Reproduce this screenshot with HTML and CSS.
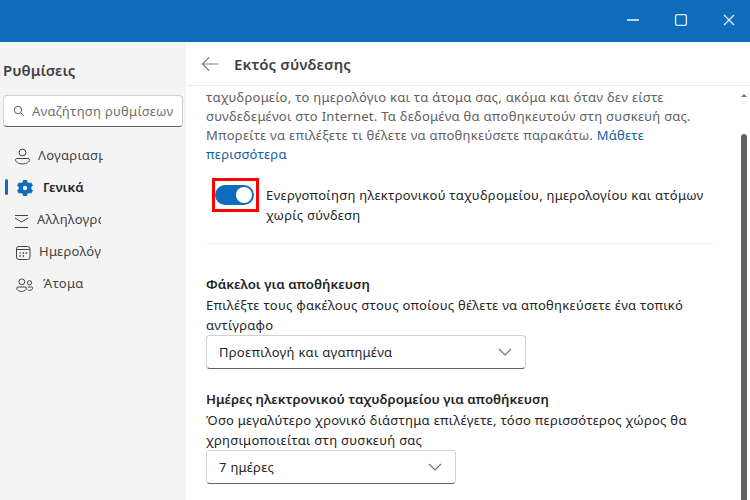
FILE: index.html
```html
<!DOCTYPE html>
<html lang="el">
<head>
  <meta charset="UTF-8">
  <meta name="viewport" content="width=device-width, initial-scale=1.0">
  <title>Ρυθμίσεις</title>
  <link rel="stylesheet" href="styles.css">
</head>
<body>
  <header class="titlebar">
    <svg class="win-icon" viewBox="0 0 14 14"><path d="M1 7h12" stroke-width="1.6"/></svg>
    <svg class="win-icon" viewBox="0 0 14 14"><rect x="1.6" y="1.6" width="10.8" height="10.8" rx="1.4"/></svg>
    <svg class="win-icon" viewBox="0 0 14 14"><path d="M2 2l10 10M12 2L2 12"/></svg>
  </header>

  <div class="window">
    <aside class="sidebar">
      <h1>Ρυθμίσεις</h1>
      <div class="search">
        <svg class="icon search-icon" viewBox="0 0 12 12"><circle cx="5" cy="5" r="3.7"/><path d="M7.8 7.8l3 3"/></svg>
        <span>Αναζήτηση ρυθμίσεων</span>
      </div>
      <nav class="menu">
        <div class="menu-item accounts">
          <svg class="icon" viewBox="0 0 18 18"><circle cx="9.5" cy="5.5" r="3.4"/><path d="M4 11.500h11c.9 0 1.500.5 1.500 1.300 0 2.200-2.900 4.100-7 4.100s-7-1.900-7-4.100c0-.8.6-1.300 1.500-1.300z"/></svg>
          <span>Λογαριασμοί</span>
        </div>
        <div class="menu-item general active">
          <svg class="icon gear" viewBox="0 0 18 18"><path fill-rule="evenodd" d="M7.200 1h3.600l.6 2.300 1.500.8 2.300-.7 1.800 3.100-1.700 1.600v1.800l1.700 1.600-1.800 3.100-2.300-.7-1.500.8-.6 2.300H7.200l-.6-2.300-1.500-.8-2.300.7L1 11.500l1.700-1.600V8.100L1 6.500l1.800-3.100 2.300.7 1.500-.8zM9 6.800a2.200 2.200 0 1 0 0 4.400 2.200 2.200 0 0 0 0-4.400z"/></svg>
          <span>Γενικά</span>
        </div>
        <div class="menu-item mail">
          <svg class="icon" viewBox="0 0 18 18"><path d="M2 4.500h13M2 16.500h13M2 7l6.500 4 6.500-4"/></svg>
          <span>Αλληλογραφία</span>
        </div>
        <div class="menu-item calendar">
          <svg class="icon" viewBox="0 0 18 18"><rect x="3.500" y="3.500" width="13.500" height="13" rx="2.300"/><path d="M3.500 6.500H17"/><path d="M9.500 10h1.500M12.700 10h1.500M6.300 13h1.500M9.500 13h1.500" stroke-width="1.500"/><path d="M6.300 10h1.500" stroke-width="1"/></svg>
          <span>Ημερολόγιο</span>
        </div>
        <div class="menu-item people">
          <svg class="icon" viewBox="0 0 18 18"><circle cx="6.800" cy="6.800" r="2.900"/><circle cx="14.500" cy="7.800" r="2.100"/><path d="M3 12h7.200c.8 0 1.200.4 1.200 1 0 2-2 3.500-4.800 3.500s-4.800-1.500-4.800-3.500c0-.6.400-1 1.200-1zM12.800 12h4c.6 0 .9.300.9.900 0 1.400-1.500 2.400-3.200 2.400-.7 0-1.300-.1-1.900-.4"/></svg>
          <span>Άτομα</span>
        </div>
      </nav>
    </aside>

    <main class="panel">
      <div class="panel-header">
        <svg class="back" viewBox="0 0 18 16"><path d="M8.300 1.200L1.300 8l7 6.800M1.300 8h15.700"/></svg>
        <h2>Εκτός σύνδεσης</h2>
      </div>
      <div class="panel-body">
        <div class="content">
          <p class="intro">ταχυδρομείο, το ημερολόγιο και τα άτομα σας, ακόμα και όταν δεν είστε<br>συνδεδεμένοι στο Internet. Τα δεδομένα θα αποθηκευτούν στη συσκευή σας.<br>Μπορείτε να επιλέξετε τι θέλετε να αποθηκεύσετε παρακάτω. <a>Μάθετε<br>περισσότερα</a></p>
          <div class="toggle-row">
            <div class="highlight"><div class="toggle"><div class="knob"></div></div></div>
            <p>Ενεργοποίηση ηλεκτρονικού ταχυδρομείου, ημερολογίου και ατόμων<br>χωρίς σύνδεση</p>
          </div>
          <section class="setting folders">
            <h3>Φάκελοι για αποθήκευση</h3>
            <p>Επιλέξτε τους φακέλους στους οποίους θέλετε να αποθηκεύσετε ένα τοπικό<br>αντίγραφο</p>
            <div class="select">
              <span>Προεπιλογή και αγαπημένα</span>
              <svg class="chevron warm" viewBox="0 0 14 8"><path d="M1 1l6 6 6-6"/></svg>
            </div>
          </section>
          <section class="setting days">
            <h3>Ημέρες ηλεκτρονικού ταχυδρομείου για αποθήκευση</h3>
            <p>Όσο μεγαλύτερο χρονικό διάστημα επιλέγετε, τόσο περισσότερος χώρος θα<br>χρησιμοποιείται στη συσκευή σας</p>
            <div class="select">
              <span>7 ημέρες</span>
              <svg class="chevron" viewBox="0 0 14 8"><path d="M1 1l6 6 6-6"/></svg>
            </div>
          </section>
        </div>
        <div class="scrollbar">
          <div class="scroll-up"></div>
          <div class="thumb"></div>
        </div>
      </div>
    </main>
  </div>
</body>
</html>
```
FILE: styles.css
```css
* {
  box-sizing: border-box;
}
body {
  font-family: "Noto Sans", "Open Sans", sans-serif;
  font-size: 13px;
  letter-spacing: 0.28px;
  line-height: 20px;
  color: #242424;
  background-color: #fff;
  margin: 0;
  height: 100vh;
  display: flex;
  flex-direction: column;
  overflow: hidden;
}
h1, h2, h3, p {
  margin: 0;
}
h1, h2, h3 {
  letter-spacing: 0;
}
svg {
  fill: none;
  flex-shrink: 0;
}
.titlebar {
  height: 42px;
  flex-shrink: 0;
  background-color: #0f6cbd;
  display: flex;
  justify-content: flex-end;
  align-items: center;
  gap: 34px;
  padding: 0 14px 2px 0;
}
.win-icon {
  width: 14px;
  height: 14px;
  stroke: #e4eef8;
  stroke-width: 1.3;
}
.window {
  flex: 1;
  display: flex;
  min-height: 0;
}
.sidebar {
  width: 186px;
  flex-shrink: 0;
  background-color: #f4f4f4;
  padding: 18px 3px 0;
}
.sidebar h1 {
  font-size: 15px;
  font-weight: 600;
  color: #424242;
  line-height: 20px;
}
.search {
  display: flex;
  align-items: center;
  gap: 7px;
  width: 180px;
  height: 32px;
  margin-top: 15px;
  padding-left: 9px;
  background-color: #fff;
  border: 1px solid #d1d1d1;
  border-bottom-color: #616161;
  border-radius: 4px;
  color: #707070;
  white-space: nowrap;
}
.icon {
  width: 18px;
  height: 18px;
  stroke: #424242;
  stroke-width: 1;
}
.search-icon {
  width: 12px;
  height: 12px;
  stroke: #616161;
}
.menu {
  margin-top: 12px;
}
.menu-item {
  display: flex;
  align-items: center;
  height: 32px;
  width: 100px;
  padding-left: 10px;
  color: #424242;
  overflow: hidden;
  white-space: nowrap;
}
.menu-item .icon {
  margin-top: 2px;
}
.accounts span {
  margin-left: 7px;
}
.general {
  padding-left: 0;
  color: #242424;
  font-size: 13.2px;
  font-weight: 600;
  letter-spacing: 0;
}
.general::before {
  content: "";
  width: 3px;
  height: 16px;
  margin: 0 10px 0 2px;
  border-radius: 2px;
  background-color: #0f6cbd;
}
.general .gear {
  margin-right: 9px;
  margin-left: -2px;
  fill: #0f6cbd;
  stroke: none;
}
.mail {
  width: 98px;
}
.mail span {
  margin-left: 6px;
}
.calendar {
  width: 99px;
}
.calendar span {
  margin-left: 8px;
}
.people {
  padding-left: 12px;
}
.people span {
  margin-left: 10px;
}
.panel {
  flex: 1;
  display: flex;
  flex-direction: column;
  min-width: 0;
}
.panel-header {
  display: flex;
  align-items: center;
  gap: 15px;
  height: 44px;
  flex-shrink: 0;
  padding-left: 15px;
  border-bottom: 1px solid #ebebeb;
}
.panel-header h2 {
  font-size: 15px;
  font-weight: 600;
  letter-spacing: 0.15px;
  color: #424242;
}
.back {
  width: 18px;
  height: 16px;
  stroke: #808080;
  stroke-width: 1.2;
}
.panel-body {
  flex: 1;
  display: flex;
  min-height: 0;
}
.content {
  flex: 1;
  padding: 2px 0 0 20px;
  white-space: nowrap;
}
.intro {
  color: #616161;
  line-height: 19px;
}
.intro a {
  color: #115ea3;
}
.toggle-row {
  display: flex;
  gap: 7px;
  width: 508px;
  height: 80px;
  padding: 14px 0 0 6px;
  border-bottom: 1px solid #f0f0f0;
}
.toggle-row p {
  padding-top: 7px;
}
.highlight {
  width: 47px;
  height: 34px;
  flex-shrink: 0;
  border: 3px solid #ff0000;
  display: flex;
  align-items: center;
}
.toggle {
  width: 39px;
  height: 20px;
  border-radius: 10px;
  background-color: #0f6cbd;
  display: flex;
  align-items: center;
  justify-content: flex-end;
  padding-right: 2px;
}
.knob {
  width: 16px;
  height: 16px;
  border-radius: 50%;
  background-color: #fff;
}
.setting h3 {
  font-size: 13.25px;
  font-weight: 600;
  line-height: 20px;
}
.folders {
  margin-top: 30px;
}
.folders h3 {
  margin-bottom: 1px;
}
.days {
  margin-top: 20px;
}
.days h3 {
  margin-bottom: 1px;
}
.select {
  display: flex;
  align-items: center;
  justify-content: space-between;
  width: 320px;
  height: 34px;
  padding: 0 13px 0 12px;
  border: 1px solid #d1d1d1;
  border-bottom-color: #616161;
  border-radius: 4px;
}
.days .select {
  width: 250px;
}
.chevron {
  width: 14px;
  height: 8px;
  stroke: #6b7580;
  stroke-width: 1.2;
}
.chevron.warm {
  stroke: #806a60;
}
.scrollbar {
  width: 12px;
  display: flex;
  flex-direction: column;
  align-items: center;
}
.scroll-up {
  margin-top: 8px;
  border: 3px solid transparent;
  border-top: 0;
  border-bottom: 3px solid #707070;
}
.thumb {
  flex: 1;
  width: 6px;
  margin-top: 37px;
  border-radius: 3px 3px 0 0;
  background-color: #616161;
}
```
